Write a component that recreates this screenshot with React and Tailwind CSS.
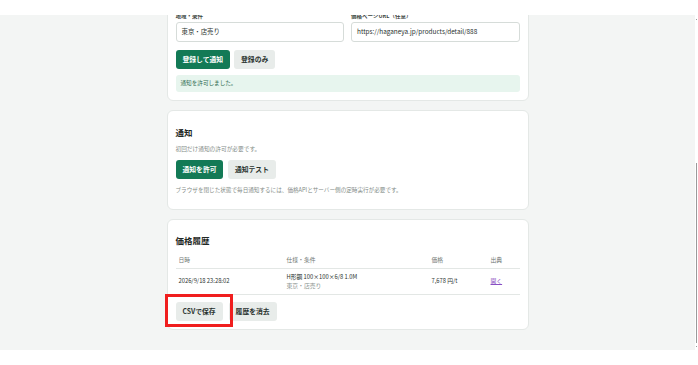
const font = { fontFamily: '"Noto Sans CJK JP", "Noto Sans", sans-serif' }

const Button = ({ primary, children }) => (
  <button
    className={
      primary
        ? 'h-[19px] px-[7px] rounded-[3px] bg-[#137a56] text-white text-[6.8px] font-bold leading-none'
        : 'h-[19px] px-[7px] rounded-[3px] bg-[#e8ecea] text-[#2a332f] text-[6.8px] font-bold leading-none'
    }
  >
    {children}
  </button>
)

const Card = ({ className, children }) => (
  <section className={`relative bg-white border border-[#e4e8e6] rounded-[6px] px-[8px] ${className}`}>
    {children}
  </section>
)

export default function App() {
  return (
    <div className="w-[698px] h-[365px] bg-white overflow-hidden flex flex-col text-[#26302c]" style={font}>
      {/* top bar */}
      <div className="h-[15px] bg-white shrink-0" />

      <div className="h-[335px] flex shrink-0">
        <div className="w-[695px] bg-[#f3f5f4] overflow-hidden">
          <div className="w-[362px] mx-auto flex flex-col gap-[9px] mt-[-12px]">
            {/* register card */}
            <Card className="pt-[9px] pb-[8px]">
              <div className="grid grid-cols-2 gap-x-[7px]">
                <div>
                  <div className="text-[5.5px] leading-[7px] font-bold text-[#3a4440] mb-[2px]">地域・条件</div>
                  <div className="h-[20px] border border-[#d6dcd9] rounded-[3px] flex items-center px-[5px] text-[6.4px] text-[#2a332f]">
                    東京・店売り
                  </div>
                </div>
                <div>
                  <div className="text-[5.5px] leading-[7px] font-bold text-[#3a4440] mb-[2px]">価格ページURL（任意）</div>
                  <div className="h-[20px] border border-[#d6dcd9] rounded-[3px] flex items-center px-[5px] text-[6.4px] text-[#2a332f]">
                    https://haganeya.jp/products/detail/888
                  </div>
                </div>
              </div>
              <div className="flex gap-[4px] mt-[8px]">
                <Button primary>登録して通知</Button>
                <Button>登録のみ</Button>
              </div>
              <div className="mt-[6px] h-[17px] rounded-[3px] bg-[#e7f5ee] flex items-center px-[5px] text-[5.6px] text-[#2e6b50]">
                通知を許可しました。
              </div>
            </Card>

            {/* notification card */}
            <Card className="pt-[15px] pb-[15px]">
              <h2 className="text-[8.5px] leading-[12px] font-bold text-[#1f2925]">通知</h2>
              <p className="mt-[6.5px] text-[5.7px] leading-[8px] text-[#848c88]">初回だけ通知の許可が必要です。</p>
              <div className="flex gap-[4.5px] mt-[7px]">
                <Button primary>通知を許可</Button>
                <Button>通知テスト</Button>
              </div>
              <p className="mt-[7.5px] text-[5.6px] leading-[8px] text-[#848c88]">
                ブラウザを閉じた状態で毎日通知するには、価格APIとサーバー側の定時実行が必要です。
              </p>
            </Card>

            {/* history card */}
            <Card className="pt-[14px] pb-[8px]">
              <h2 className="text-[8.5px] leading-[12px] font-bold text-[#1f2925]">価格履歴</h2>
              <div className="mt-[7px] text-[5.8px]">
                <div className="grid grid-cols-[108px_145px_59px_1fr] h-[16px] items-center border-b border-[#e3e7e5] text-[#6f7773]">
                  <div className="px-[3px]">日時</div>
                  <div className="px-[3px]">仕様・条件</div>
                  <div className="px-[3px]">価格</div>
                  <div className="px-[3px]">出典</div>
                </div>
                <div className="grid grid-cols-[108px_145px_59px_1fr] h-[26px] items-center border-b border-[#e3e7e5] text-[#2a332f]">
                  <div className="px-[3px]">2026/9/18 23:28:02</div>
                  <div className="px-[3px] leading-[8.7px]">
                    <div>H形鋼 100×100×6/8 1.0M</div>
                    <div className="text-[#8a928e]">東京・店売り</div>
                  </div>
                  <div className="px-[3px]">7,678 円/t</div>
                  <div className="px-[3px]">
                    <a className="text-[#8a4fc2] underline">開く</a>
                  </div>
                </div>
              </div>
              <div className="flex gap-[6px] mt-[6.5px]">
                <Button>CSVで保存</Button>
                <Button>履歴を消去</Button>
              </div>
              {/* highlight annotation */}
              <div className="absolute left-[-3px] top-[74px] w-[68px] h-[32.5px] border-[3px] border-[#f01e1e]" />
            </Card>
          </div>
        </div>

        {/* scrollbar */}
        <div className="w-[3px] bg-white flex flex-col items-center">
          <div className="mt-[4px] w-[1px] h-[1px] bg-[#999]" />
          <div className="mt-[143px] w-[1.5px] h-[180px] bg-[#9a9a9a]" />
          <div className="mt-[3px] w-[1px] h-[1px] bg-[#999]" />
        </div>
      </div>

      <div className="flex-1 bg-white" />
    </div>
  )
}
